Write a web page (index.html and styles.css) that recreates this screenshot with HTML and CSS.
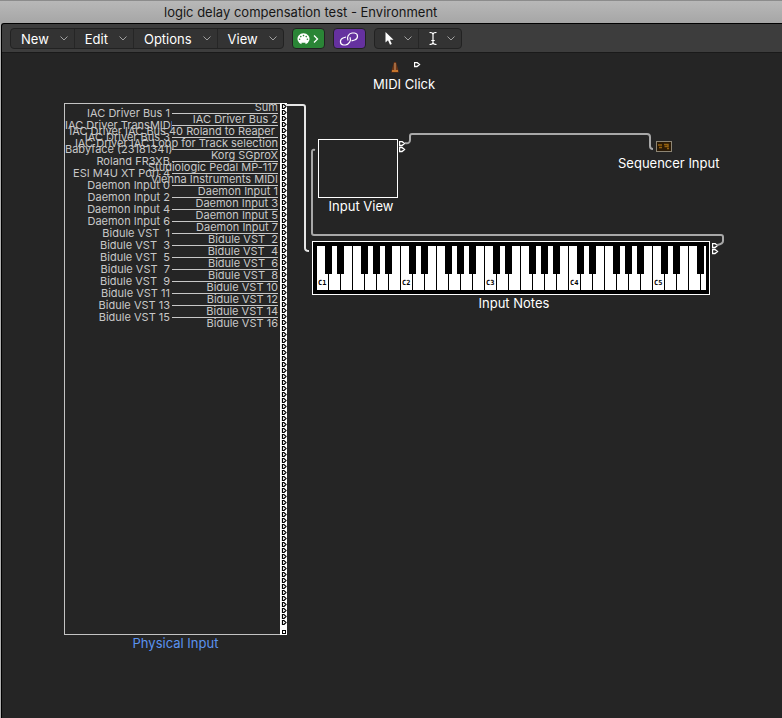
FILE: index.html
```
<!DOCTYPE html>
<html lang="en">
<head>
    <meta charset="UTF-8">
    <meta name="viewport" content="width=device-width, initial-scale=1.0">
    <title>logic delay compensation test - Environment</title>
    <link rel="stylesheet" href="styles.css">
</head>
<body>
    <header class="titlebar">
        <h1>logic delay compensation test - Environment</h1>
    </header>

    <div class="window">
        <nav class="toolbar">
            <div class="group">
                <button type="button" class="menu">New <svg class="chevron" viewBox="0 0 8 5"><path d="M0.5 0.5 4 4 7.5 0.5"/></svg></button>
                <button type="button" class="menu">Edit <svg class="chevron" viewBox="0 0 8 5"><path d="M0.5 0.5 4 4 7.5 0.5"/></svg></button>
                <button type="button" class="menu">Options <svg class="chevron" viewBox="0 0 8 5"><path d="M0.5 0.5 4 4 7.5 0.5"/></svg></button>
                <button type="button" class="menu">View <svg class="chevron" viewBox="0 0 8 5"><path d="M0.5 0.5 4 4 7.5 0.5"/></svg></button>
            </div>

            <button type="button" class="toggle midi" aria-label="MIDI Out">
                <svg width="22" height="12" viewBox="0 0 22 12">
                    <path d="M4.5 11.2A6 5.6 0 1 1 8.5 11.2V9.8H4.5Z" fill="#fff"/>
                    <g fill="#2a8536"><circle cx="2.6" cy="6.2" r="0.8"/><circle cx="3.8" cy="3.6" r="0.8"/><circle cx="6.5" cy="2.6" r="0.8"/><circle cx="9.2" cy="3.6" r="0.8"/><circle cx="10.4" cy="6.2" r="0.8"/></g>
                    <path d="M17 2.5 20.5 6 17 9.5" fill="none" stroke="#fff" stroke-width="1.3"/>
                </svg>
            </button>

            <button type="button" class="toggle link" aria-label="Link">
                <svg width="20" height="14" viewBox="0 0 20 14" fill="none" stroke="#fff" stroke-width="1.2">
                    <path d="M9 8.5C7.5 5.5 9.5 1.5 13 1H15.5C19.5 1.5 19.5 6.5 15.5 8L12.5 8.8"/>
                    <path d="M11 5.3C12.5 8.5 10 12.5 6.5 13H4.5C0.5 12.5 0.5 7.5 4 6L7 5"/>
                </svg>
            </button>

            <div class="group tools">
                <button type="button" class="menu" aria-label="Pointer tool">
                    <svg width="9" height="13" viewBox="0 0 9 13"><path d="M0.5 0V10.5L3 8.3 5 12.7 6.8 11.9 4.9 7.7H8.5Z" fill="#fff"/></svg>
                    <svg class="chevron" viewBox="0 0 8 5"><path d="M0.5 0.5 4 4 7.5 0.5"/></svg>
                </button>
                <button type="button" class="menu" aria-label="Text tool">
                    <svg width="8" height="13" viewBox="0 0 8 13"><path d="M0.5 0.5C2.5 0.5 4 1 4 2.5V10.5C4 12 2.5 12.5 0.5 12.5M7.5 0.5C5.5 0.5 4 1 4 2.5M4 10.5C4 12 5.5 12.5 7.5 12.5M2.3 8.5H5.7" fill="none" stroke="#fff" stroke-width="1.2"/></svg>
                    <svg class="chevron" viewBox="0 0 8 5"><path d="M0.5 0.5 4 4 7.5 0.5"/></svg>
                </button>
            </div>
        </nav>

        <main class="canvas">
            <!-- cables between objects -->
            <svg class="cables" width="740" height="260" fill="none">
                <path class="active" d="M286 52H303Q305 52 305 54V195Q305 198 309 198"/>
                <path d="M405 90Q410 91 410 87V83Q410 81 412 81H647Q650 81 650 84V93Q650 96 653 96"/>
                <path d="M315 97Q312 96 312 99V180Q312 182 314 182H721Q723 182 723 184V188Q723 191 717 192"/>
            </svg>

            <section class="node click">
                <svg width="8" height="11" viewBox="0 0 8 11"><path d="M3 0H5L8 10.5H0Z" fill="#6b3414"/><path d="M1 8H7V10H1Z" fill="#c7762c"/><path d="M4 1V8" stroke="#d8a070"/></svg>
                <svg class="port" width="7" height="6" viewBox="0 0 7 6"><path d="M0.5 0.5H3L5.5 2.5 3 4.5H0.5Z"/></svg>
                <h2>MIDI Click</h2>
            </section>

            <section class="node physical">
                <div class="box">
                    <ul class="names odd">
                        <li>IAC Driver Bus 1</li>
                        <li>IAC Driver TransMIDI</li>
                        <li>IAC Driver Bus 3</li>
                        <li>Babyface (23181341)</li>
                        <li>Roland FR3XB</li>
                        <li>ESI M4U XT Port 4</li>
                        <li>Daemon Input 0</li>
                        <li>Daemon Input 2</li>
                        <li>Daemon Input 4</li>
                        <li>Daemon Input 6</li>
                        <li>Bidule VST  1</li>
                        <li>Bidule VST  3</li>
                        <li>Bidule VST  5</li>
                        <li>Bidule VST  7</li>
                        <li>Bidule VST  9</li>
                        <li>Bidule VST 11</li>
                        <li>Bidule VST 13</li>
                        <li>Bidule VST 15</li>
                    </ul>
                    <ul class="names even">
                        <li>Sum</li>
                        <li>IAC Driver Bus 2</li>
                        <li>IAC Driver IAC Bus 40 Roland to Reaper </li>
                        <li>IAC Driver IAC Loop for Track selection</li>
                        <li>Korg SGproX</li>
                        <li>Studiologic Pedal MP-117</li>
                        <li>Vienna Instruments MIDI</li>
                        <li>Daemon Input 1</li>
                        <li>Daemon Input 3</li>
                        <li>Daemon Input 5</li>
                        <li>Daemon Input 7</li>
                        <li>Bidule VST  2</li>
                        <li>Bidule VST  4</li>
                        <li>Bidule VST  6</li>
                        <li>Bidule VST  8</li>
                        <li>Bidule VST 10</li>
                        <li>Bidule VST 12</li>
                        <li>Bidule VST 14</li>
                        <li>Bidule VST 16</li>
                    </ul>
                    <svg class="ports" width="7" height="532">
                        <defs>
                            <pattern id="port" width="7" height="6" patternUnits="userSpaceOnUse">
                                <path d="M2.5 1.5V5.5H4L6 3.5 4 1.5Z" fill="#fff" stroke="#000" stroke-width="1.2"/>
                            </pattern>
                        </defs>
                        <rect width="7" height="532" fill="#fff"/>
                        <rect width="7" height="522" fill="url(#port)"/>
                        <rect x="2.5" y="527.5" width="3" height="3" fill="#fff" stroke="#000"/>
                    </svg>
                </div>
                <h2>Physical Input</h2>
            </section>

            <section class="node view">
                <div class="screen"></div>
                <svg class="port" width="7" height="12" viewBox="0 0 7 12"><path d="M0.5 0.5H3L5.5 2.5 3 4.5H0.5ZM0.5 6.5H3L5.5 8.5 3 10.5H0.5Z"/></svg>
                <h2>Input View</h2>
            </section>

            <section class="node sequencer">
                <svg width="16" height="11" viewBox="0 0 16 11"><rect x="0.5" y="0.5" width="15" height="10" fill="#2b1a05" stroke="#8d8574"/><path d="M2 4H6M3 6.5H6M8 3.5H12V5.5H8.5M11 7.5H13" fill="none" stroke="#94610f" stroke-width="1.5"/></svg>
                <h2>Sequencer Input</h2>
            </section>

            <section class="node notes">
                <div class="keyboard">
                    <div class="keys">
                        <div class="octave">C1</div>
                        <div class="octave">C2</div>
                        <div class="octave">C3</div>
                        <div class="octave">C4</div>
                        <div class="octave">C5</div>
                    </div>
                </div>
                <svg class="port" width="7" height="12" viewBox="0 0 7 12"><path d="M0.5 0.5H3L5.5 2.5 3 4.5H0.5ZM0.5 6.5H3L5.5 8.5 3 10.5H0.5Z"/></svg>
                <h2>Input Notes</h2>
            </section>
        </main>
    </div>
</body>
</html>
```
FILE: styles.css
```
* {
    box-sizing: border-box;
}

body {
    margin: 0;
    min-height: 100vh;
    display: flex;
    flex-direction: column;
    background-color: #b0b0b0;
    font-family: Inter, "Liberation Sans", sans-serif;
    font-size: 13px;
    color: #fff;
}

h1, h2 {
    margin: 0;
    font-size: 13px;
    font-weight: 400;
    line-height: 16px;
    white-space: nowrap;
}

.titlebar {
    height: 23px;
    padding: 3px 0 0 164px;
    background: linear-gradient(#b8b8b8, #a6a6a6);
    border-top: 1px solid #8c8c8c;
    color: #161616;
}

.window {
    flex: 1;
    display: flex;
    flex-direction: column;
    margin-left: 1px;
    border-top: 1px solid #000;
    border-left: 1px solid #000;
    border-top-left-radius: 3px;
    background-color: #252525;
}

/* Toolbar */
.toolbar {
    display: flex;
    gap: 8px;
    height: 29px;
    padding: 4px 8px;
    background-color: #3d3d3d;
    border-bottom: 1px solid #1a1a1a;
    border-top-left-radius: 3px;
}

.group {
    display: flex;
    height: 21px;
    background-color: #333;
    border: 1px solid #222;
    border-radius: 4px;
}

button {
    margin: 0;
    border: 0;
    background: none;
    color: #fff;
    font: inherit;
}

.menu {
    display: flex;
    align-items: center;
    gap: 11px;
    padding: 0 6px 0 10px;
}

.menu + .menu {
    border-left: 1px solid #262626;
}

.tools .menu {
    gap: 10px;
}

.chevron {
    width: 8px;
    height: 5px;
    fill: none;
    stroke: #a0a0a0;
}

.toggle {
    display: flex;
    align-items: center;
    justify-content: center;
    width: 33px;
    height: 21px;
    padding: 0;
    border: 1px solid #222;
    border-radius: 4px;
}

.midi {
    background-color: #2a8536;
}

.link {
    background-color: #65319f;
}

/* Environment layer */
.canvas {
    flex: 1;
    position: relative;
    min-height: 600px;
    overflow: hidden;
}

.cables {
    position: absolute;
    top: 0;
    left: -2px;
    z-index: 1;
    stroke: #a8a8a8;
    stroke-width: 2;
}

.cables .active {
    stroke: #e6e6e6;
}

.node {
    position: absolute;
    text-align: center;
}

.node svg {
    display: block;
}

.port {
    position: absolute;
    fill: none;
    stroke: #fff;
    stroke-width: 1.3;
}

.click {
    top: 9px;
    left: 371px;
}

.click svg {
    margin: 0 0 3px 18px;
}

.click .port {
    top: 0;
    left: 41px;
    margin: 0;
}

.physical {
    top: 50px;
    left: 62px;
}

.physical h2 {
    color: #5b93f0;
}

.box {
    position: relative;
    width: 223px;
    height: 532px;
    border: 1px solid #c4c4c4;
    border-right: 0;
}

.names {
    position: absolute;
    margin: 0;
    padding: 0;
    list-style: none;
    font-size: 11px;
    line-height: 12px;
    color: #c8c8c8;
    text-align: right;
}

.names li {
    height: 12px;
    white-space: pre;
}

.odd {
    top: 3px;
    left: 0;
    width: 107px;
}

.odd li {
    padding-right: 2px;
    overflow: hidden;
}

.even {
    top: -3px;
    right: 9px;
    width: 213px;
}

/* rule from the odd name to the port column */
.even li + li::before {
    content: "";
    position: absolute;
    right: 0;
    width: 106px;
    border-top: 1px solid #c8c8c8;
}

.ports {
    position: absolute;
    top: -1px;
    right: 0;
}

.view {
    top: 86px;
    left: 316px;
}

.screen {
    width: 80px;
    height: 59px;
    border: 1px solid #fff;
}

.view h2 {
    padding-left: 6px;
}

.view .port {
    top: 2px;
    left: 81px;
}

.sequencer {
    top: 88px;
    left: 616px;
}

.sequencer svg {
    margin: 0 0 3px 38px;
}

.notes {
    top: 188px;
    left: 310px;
}

.keyboard {
    width: 398px;
    height: 54px;
    padding: 4px 3px 4px 4px;
    border: 1px solid #fff;
    background-color: #000;
}

.keys {
    display: flex;
    width: 389px;
    height: 44px;
    overflow: hidden;
}

.octave {
    flex: none;
    width: 84px;
    padding: 32px 0 0 1px;
    background:
        linear-gradient(#000, #000) 8px 0 / 7px 28px no-repeat,
        linear-gradient(#000, #000) 20px 0 / 7px 28px no-repeat,
        linear-gradient(#000, #000) 44px 0 / 7px 28px no-repeat,
        linear-gradient(#000, #000) 56px 0 / 7px 28px no-repeat,
        linear-gradient(#000, #000) 68px 0 / 7px 28px no-repeat,
        repeating-linear-gradient(90deg, #fff 0 11px, #000 11px 12px);
    font-family: "DejaVu Sans Mono", monospace;
    font-size: 7px;
    font-weight: 700;
    line-height: 10px;
    color: #000;
    text-align: left;
}

.notes .port {
    top: 2px;
    left: 400px;
}

.notes h2 {
    padding-left: 6px;
}
```
